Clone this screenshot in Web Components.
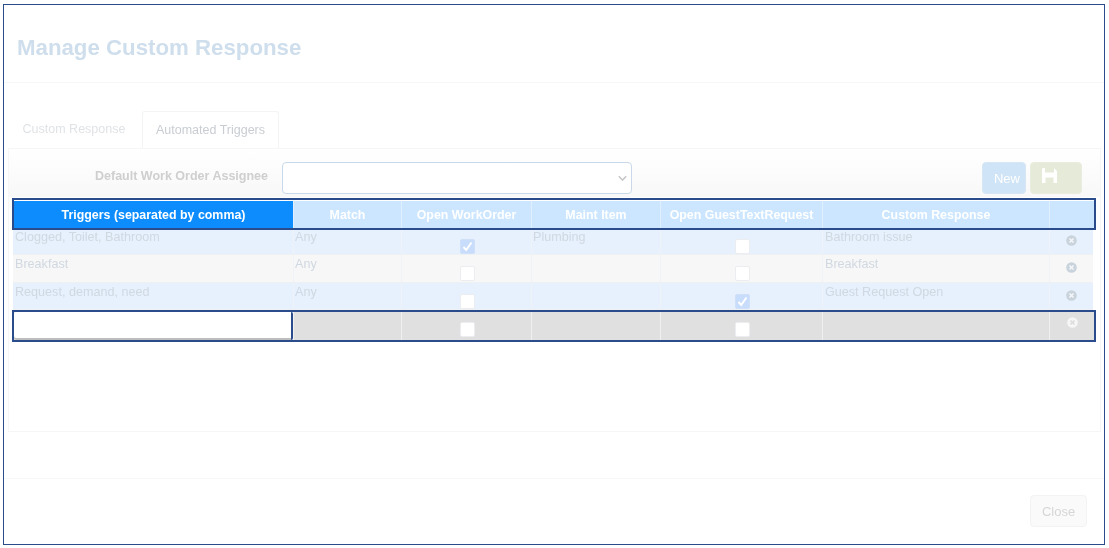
<!DOCTYPE html>
<html lang="en"><head><meta charset="utf-8"><title>Manage Custom Response</title>
<style>
html,body{margin:0;padding:0;background:#fff;font-family:"Liberation Sans",Arial,sans-serif}
</style></head><body>
<cr-modal>
  <cr-header slot="header">Manage Custom Response</cr-header>
  <cr-tabs></cr-tabs>
  <cr-panel>
    <cr-toolbar></cr-toolbar>
    <cr-grid></cr-grid>
  </cr-panel>
  <cr-button slot="footer" variant="close">Close</cr-button>
</cr-modal>
<script>
function def(name, css, html, init){
  customElements.define(name, class extends HTMLElement{
    constructor(){super();const r=this.attachShadow({mode:'open'});r.innerHTML='<style>'+css+'</style>'+html;}
    connectedCallback(){ if(init) init.call(this,this.shadowRoot); }
  });
}
def('cr-modal',`
  :host{display:flex;flex-direction:column;box-sizing:border-box;height:541px;margin:4px 4px 3px 3px;border:1px solid #2b4c8c;background:#fff;filter:blur(.3px)}
  .body{height:395px;padding:28px 0 0 4px;box-sizing:border-box}
  .foot{display:flex;justify-content:flex-end;flex:1;border-top:1px solid #f6f7f8;padding:16px 17px 0 0;box-sizing:border-box}
`,`<slot name="header"></slot><div class="body"><slot></slot></div><div class="foot"><slot name="footer"></slot></div>`);

def('cr-header',`
  :host{display:flex;align-items:center;box-sizing:border-box;height:78px;padding:9px 0 0 13px;border-bottom:1px solid #f6f7f8;font-weight:700;font-size:22.25px;color:#cfdeec}
`,`<slot></slot>`);

def('cr-tabs',`
  :host{display:flex;height:37px;font-size:12.5px;box-sizing:border-box}
  .t{box-sizing:border-box;height:37px;display:flex;align-items:center;justify-content:center;padding-bottom:1px}
  .a{width:134px;color:#e0e3e6;padding-right:2px}
  .b{width:137px;color:#c9cdd2;border:1px solid #f3f4f5;border-bottom:0;border-radius:3px 3px 0 0;background:#fff}
`,`<div class="t a">Custom Response</div><div class="t b">Automated Triggers</div>`);

def('cr-panel',`
  :host{display:block;box-sizing:border-box;width:1093px;height:284px;border:1px solid #f6f6f6}
`,`<slot></slot>`);

def('cr-toolbar',`
  :host{display:flex;align-items:flex-start;box-sizing:border-box;height:48px;padding-top:13px;background:linear-gradient(#fff,#f8f8f8)}
  label{width:259px;text-align:right;font-weight:700;font-size:12.5px;line-height:29px;color:#cfcfcf;margin-right:14px}
  .sel{box-sizing:border-box;width:350px;height:32px;border:1px solid #c9d9ea;border-radius:4px;background:#fff;display:flex;align-items:center;justify-content:flex-end;padding-right:4px}
  .sp{flex:1}
  .btns{display:flex;gap:4px;margin-right:18px}
`,`<label>Default Work Order Assignee</label>
<div class="sel"><svg width="9" height="7" viewBox="0 0 9 7"><path d="M.8 1.2 4.5 5 8.2 1.2" fill="none" stroke="#c8c8c8" stroke-width="1.6"/></svg></div>
<div class="sp"></div>
<div class="btns"><cr-button variant="new">New</cr-button><cr-button variant="save"><svg width="15" height="15" viewBox="0 0 15 15"><path fill="#fff" d="M0 1V15H3.500V9.500H11.500V15H15V3L12.500 .5H12V4.500H3V0H1Q0 0 0 1Z"/></svg></cr-button></div>`);

def('cr-button',`
  :host{display:inline-flex;box-sizing:border-box;height:32px;border-radius:4px;font-size:13px}
  :host([variant=new]){width:44px;background:#cfe4f6;color:#fff;align-items:center;justify-content:flex-end;padding-right:5px;border:1px solid #d6e6f4}
  :host([variant=save]){width:52px;background:#e6ebd9;border:1px solid #e9eddf;padding:5px 0 0 11px}
  :host([variant=close]){width:57px;background:#fafafa;border:1px solid #f3f3f3;color:#d6d6d6;align-items:center;justify-content:center;font-size:13px}
`,`<slot></slot>`);

def('cr-check',`
  :host{display:block;box-sizing:border-box;width:15px;height:15px;background:#fff;border:1px solid #ebedf0;border-radius:2px}
  :host([on]){background:#c8dcfb;border-color:#d0e0f8}
  svg{display:block}
`,``,function(r){ if(this.hasAttribute('on')&&!r.querySelector('svg')) r.innerHTML+='<svg width="13" height="13" viewBox="0 0 13 13"><path d="M2.500 7 5.200 10 10.500 2.500" fill="none" stroke="#fff" stroke-width="2"/></svg>'; });

def('cr-remove',`
  :host{display:block;width:11px;height:11px}
  svg{display:block}
`,`<svg width="11" height="11" viewBox="0 0 11 11"><circle cx="5.500" cy="5.500" r="5.300" fill="var(--c,#c9d3dc)"/><path d="M3.500 3.500 7.500 7.500M7.500 3.500 3.500 7.500" stroke="var(--x,#f4f7fa)" stroke-width="1.600"/></svg>`);

def('cr-row',`
  :host{display:grid;grid-template-columns:280px 108px 130px 129px 162px 227px 44px;box-sizing:border-box;width:1080px;margin-left:4px;height:28px;background:var(--bg,#e6f1fd);border-bottom:1px solid #eef0f2;font-size:12.6px;color:#d0d8e1}
  .c{box-sizing:border-box;border-left:1px solid #eff3f8;padding:var(--pt,2px) 0 0 1px;line-height:14px;white-space:nowrap}
  .c:first-of-type{border-left:0;padding-left:2px}
  .c:nth-of-type(6){padding-left:2px}
  .m{display:flex;justify-content:center;padding:var(--ck,10px) 0 0 1px}
  .x{display:flex;justify-content:center;padding:var(--xp,6px) 0 0 0}
`,``,function(r){
  if(r.querySelector('.c'))return;
  const d=JSON.parse(this.getAttribute('cells'));
  r.innerHTML+=`<div class="c">${d[0]}</div><div class="c">${d[1]}</div>
  <div class="c m"><cr-check ${d[2]?'on':''}></cr-check></div><div class="c">${d[3]}</div>
  <div class="c m"><cr-check ${d[4]?'on':''}></cr-check></div><div class="c">${d[5]}</div>
  <div class="c x"><cr-remove></cr-remove></div>`;
});

def('cr-head',`
  :host{display:grid;grid-template-columns:279px 108px 130px 129px 162px 227px 45px;box-sizing:border-box;width:1084px;height:32px;margin-left:3px;border:2px solid #2b4c8c;padding-top:1px;background:#fff;position:relative;z-index:1;font-weight:700;font-size:12.4px;color:#fff}
  .h{background:#cce6ff;border-left:1px solid #e0effe;display:flex;align-items:center;justify-content:center;height:27px;white-space:nowrap}
  .h:first-of-type{background:#0d8dfd;border-left:0}
`,`<div class="h">Triggers (separated by comma)</div><div class="h">Match</div><div class="h">Open WorkOrder</div><div class="h">Maint Item</div><div class="h">Open GuestTextRequest</div><div class="h">Custom Response</div><div class="h"></div>`);

def('cr-newrow',`
  :host{display:grid;grid-template-columns:279px 108px 130px 129px 162px 227px 45px;box-sizing:border-box;width:1084px;height:32px;margin-left:3px;border:2px solid #2b4c8c;background:#e0e0e0;position:relative;z-index:1}
  .c{border-left:1px solid #f0f0f0;box-sizing:border-box;height:28px;display:flex;justify-content:center;padding:10px 0 0 1px}
  .c.i{padding:0;background:#fff;border:0;border-right:2px solid #2b4c8c;border-radius:2px;box-shadow:inset 0 -2px 0 #bdbdbd}
  .x{padding:5px 0 0;--c:#f6f6f6;--x:#dcdcdc}
`,`<div class="c i"></div><div class="c"></div><div class="c"><cr-check></cr-check></div><div class="c"></div><div class="c"><cr-check></cr-check></div><div class="c"></div><div class="c x"><cr-remove></cr-remove></div>`);

def('cr-grid',`
  :host{display:block;padding-top:1px}
`,`<cr-head></cr-head>
<cr-row style="height:25px;--pt:0px;--ck:9px;--xp:5px" cells='["Clogged, Toilet, Bathroom","Any",1,"Plumbing",0,"Bathroom issue"]'></cr-row>
<cr-row style="--bg:#f7f7f7;--pt:2px;--ck:11px;--xp:7px" cells='["Breakfast","Any",0,"",0,"Breakfast"]'></cr-row>
<cr-row style="height:27px;--pt:2px;--ck:11px;--xp:7px" cells='["Request, demand, need","Any",0,"",1,"Guest Request Open"]'></cr-row>
<cr-newrow></cr-newrow>`);
</script>
</body></html>
